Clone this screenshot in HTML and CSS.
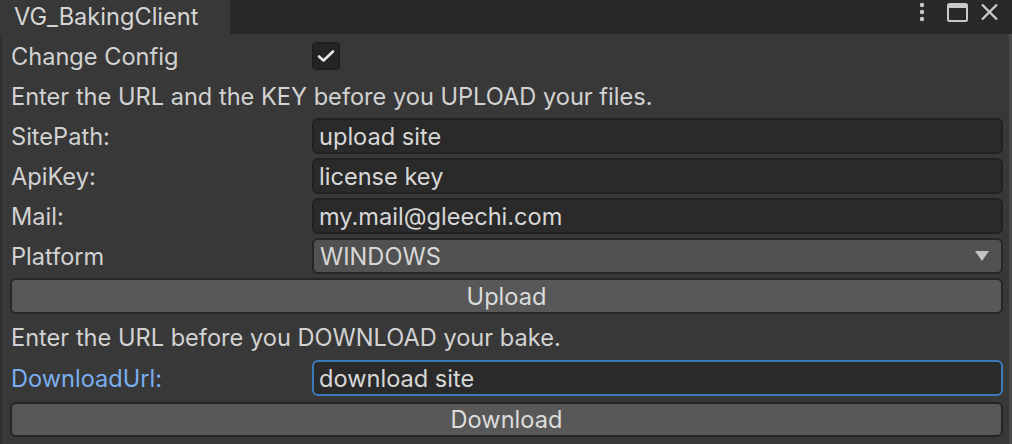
FILE: index.html
```html
<!DOCTYPE html>
<html>
<head>
<meta charset="utf-8">
<link rel="stylesheet" href="styles.css">
</head>
<body>
<div class="window">
  <div class="tabbar">
    <div class="tab">VG_BakingClient</div>
    <div class="tab-actions">
      <svg class="icon kebab" width="12" height="24" viewBox="0 0 12 24"><circle cx="6" cy="5" r="2.2" fill="#c8c8c8"/><circle cx="6" cy="12" r="2.2" fill="#c8c8c8"/><circle cx="6" cy="19" r="2.2" fill="#c8c8c8"/></svg>
      <svg class="icon maxi" width="22" height="24" viewBox="0 0 22 24"><rect x="2" y="4" width="19" height="17" rx="1.5" fill="none" stroke="#c8c8c8" stroke-width="2"/><rect x="2" y="4" width="19" height="4" fill="#c8c8c8"/></svg>
      <svg class="icon close" width="20" height="24" viewBox="0 0 20 24"><path d="M3 4.5 L18 19.5 M18 4.5 L3 19.5" stroke="#c8c8c8" stroke-width="2.4" fill="none"/></svg>
    </div>
  </div>
  <div class="panel">
    <div class="row">
      <span class="label">Change Config</span>
      <span class="checkbox"><svg width="18" height="14" viewBox="0 0 18 14"><path d="M2 7.5 L6.5 11.5 L16 2.5" stroke="#e6e6e6" stroke-width="2.6" fill="none" stroke-linecap="round" stroke-linejoin="round"/></svg></span>
    </div>
    <div class="row info">Enter the URL and the KEY before you UPLOAD your files.</div>
    <div class="row">
      <span class="label">SitePath:</span>
      <span class="field"><span class="ftext">upload site</span></span>
    </div>
    <div class="row">
      <span class="label">ApiKey:</span>
      <span class="field"><span class="ftext">license key</span></span>
    </div>
    <div class="row">
      <span class="label">Mail:</span>
      <span class="field"><span class="ftext">my.mail@gleechi.com</span></span>
    </div>
    <div class="row">
      <span class="label">Platform</span>
      <span class="field dropdown"><span class="ftext">WINDOWS</span>
        <svg class="caret" width="14" height="10" viewBox="0 0 14 10"><path d="M0 0 H14 L7 10 Z" fill="#c4c4c4"/></svg>
      </span>
    </div>
    <div class="button">Upload</div>
    <div class="row info info2">Enter the URL before you DOWNLOAD your bake.</div>
    <div class="row">
      <span class="label focus">DownloadUrl:</span>
      <span class="field focused"><span class="ftext">download site</span></span>
    </div>
    <div class="button last">Download</div>
  </div>
</div>
</body>
</html>
```
FILE: styles.css
```css
* { box-sizing: border-box; }
html, body {
  margin: 0;
  height: 100%;
  background: #383838;
  font-family: Inter, "Noto Sans", sans-serif;
  color: #d2d2d2;
  font-size: 23.6px;
}
.window {
  height: 444px;
  display: flex;
  flex-direction: column;
  overflow: hidden;
}
.tabbar {
  height: 34px;
  flex: none;
  background: #282828;
  display: flex;
  align-items: stretch;
}
.tab {
  width: 230px;
  background: #383838;
  padding-left: 14px;
  line-height: 34px;
  color: #d6d6d6;
}
.tab-actions {
  margin-left: auto;
  display: flex;
  align-items: flex-start;
  padding-top: 0;
  padding-right: 13px;
}
.kebab { margin-right: 18px; }
.maxi { margin-right: 11px; }
.panel {
  flex: 1;
  display: flex;
  flex-direction: column;
  gap: 4px;
  padding: 4px 6px 0 9px;
  border-left: 2px solid #2e2e2e;
  border-right: 3px solid #4a4a4a;
}
.row {
  height: 36px;
  display: flex;
  align-items: center;
}
.label {
  width: 301px;
  flex: none;
}
.label.focus { color: #7aaef0; }
.checkbox {
  width: 28px;
  height: 28px;
  background: #232323;
  border: 1px solid #1b1b1b;
  border-radius: 4px;
  display: flex;
  align-items: center;
  justify-content: center;
}
.field {
  flex: 1;
  height: 36px;
  background: #2a2a2a;
  border: 2px solid #212121;
  border-radius: 6px;
  display: flex;
  align-items: center;
  padding-left: 5px;
  overflow: hidden;
}
.ftext {
  white-space: nowrap;
  color: #d8d8d8;
}
.dropdown {
  background: #515151;
  border-color: #262626;
  justify-content: space-between;
  padding-left: 6px;
  padding-right: 12px;
}
.focused {
  border-color: #3a79bb;
}
.button {
  height: 36px;
  margin-left: -1px;
  background: #585858;
  border: 2px solid #252525;
  border-radius: 6px;
  display: flex;
  align-items: center;
  justify-content: center;
  color: #dcdcdc;
}
.button.last { margin-top: 2px; height: 35px; }
.info2 { height: 38px; }
```
